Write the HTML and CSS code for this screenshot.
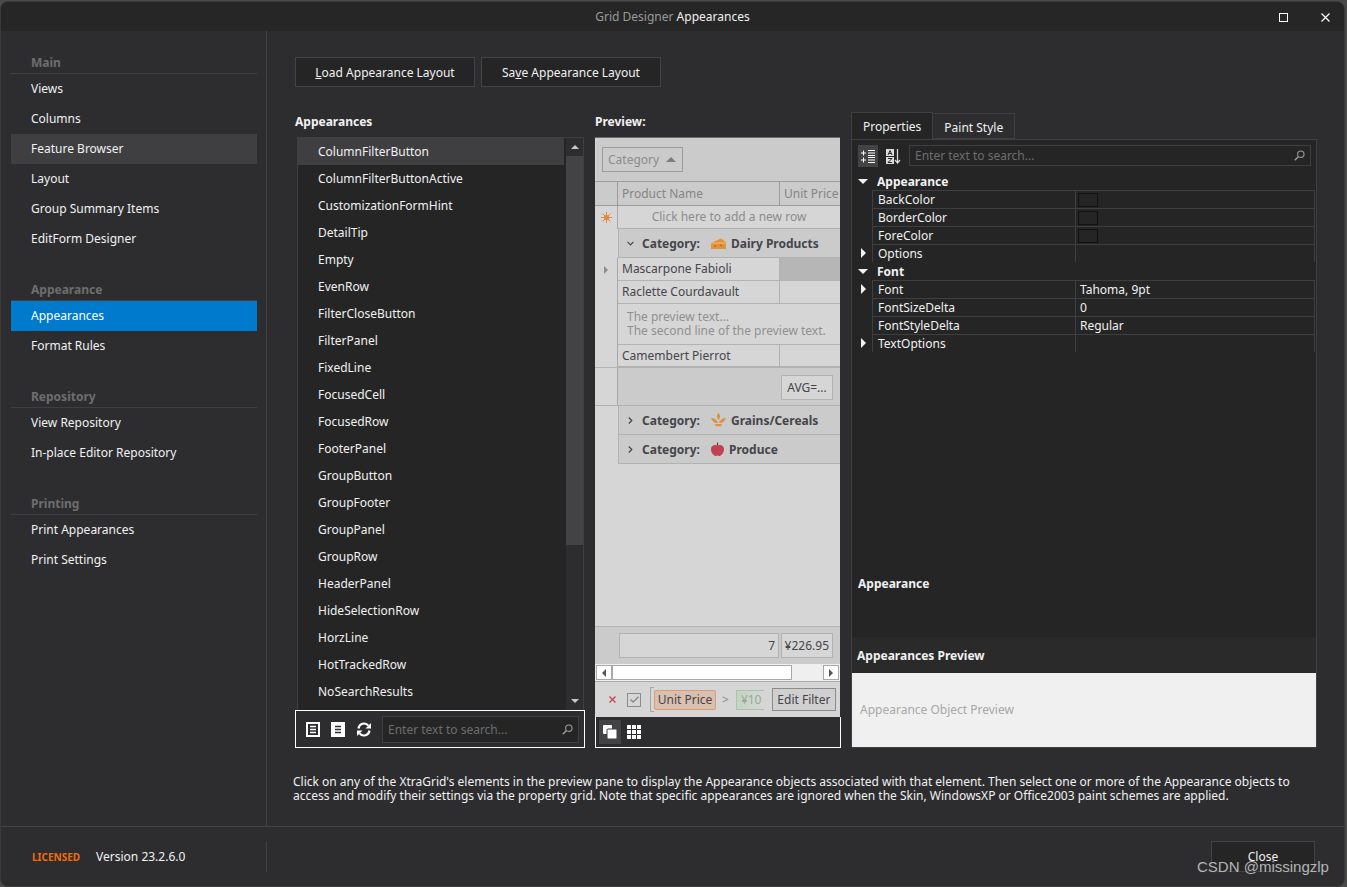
FILE: index.html
```html
<!DOCTYPE html>
<html lang="en">
<head>
  <meta charset="UTF-8" />
  <meta name="viewport" content="width=device-width, initial-scale=1.0" />
  <title>Grid Designer Appearances</title>
  <link rel="stylesheet" href="styles.css">
</head>
<body>
  <div class="window">
    <div class="titlebar">
      <span class="title"><span class="title-dim">Grid Designer</span> Appearances</span>
      <div class="win-btns">
        <svg width="9" height="9" viewBox="0 0 9 9"><rect x="0.5" y="0.5" width="8" height="8" fill="none" stroke="#fff"/></svg>
        <svg width="9" height="9" viewBox="0 0 9 9"><path d="M0.5 0.5L8.5 8.5M8.5 0.5L0.5 8.5" stroke="#fff" stroke-width="1.2"/></svg>
      </div>
    </div>

    <div class="content">
      <div class="sidebar">
        <div class="nav-group">
          <div class="nav-head">Main</div>
          <div class="nav-item">Views</div>
          <div class="nav-item">Columns</div>
          <div class="nav-item hover">Feature Browser</div>
          <div class="nav-item">Layout</div>
          <div class="nav-item">Group Summary Items</div>
          <div class="nav-item">EditForm Designer</div>
        </div>
        <div class="nav-group">
          <div class="nav-head">Appearance</div>
          <div class="nav-item active">Appearances</div>
          <div class="nav-item">Format Rules</div>
        </div>
        <div class="nav-group">
          <div class="nav-head">Repository</div>
          <div class="nav-item">View Repository</div>
          <div class="nav-item">In-place Editor Repository</div>
        </div>
        <div class="nav-group">
          <div class="nav-head">Printing</div>
          <div class="nav-item">Print Appearances</div>
          <div class="nav-item">Print Settings</div>
        </div>
      </div>

      <div class="main">
        <div class="top-btns">
          <button class="btn"><u>L</u>oad Appearance Layout</button>
          <button class="btn">Sa<u>v</u>e Appearance Layout</button>
        </div>

        <div class="columns">
          <div class="col-list">
            <div class="col-label">Appearances</div>
            <div class="listbox">
              <div class="list-items">
                <div class="list-item sel">ColumnFilterButton</div>
                <div class="list-item">ColumnFilterButtonActive</div>
                <div class="list-item">CustomizationFormHint</div>
                <div class="list-item">DetailTip</div>
                <div class="list-item">Empty</div>
                <div class="list-item">EvenRow</div>
                <div class="list-item">FilterCloseButton</div>
                <div class="list-item">FilterPanel</div>
                <div class="list-item">FixedLine</div>
                <div class="list-item">FocusedCell</div>
                <div class="list-item">FocusedRow</div>
                <div class="list-item">FooterPanel</div>
                <div class="list-item">GroupButton</div>
                <div class="list-item">GroupFooter</div>
                <div class="list-item">GroupPanel</div>
                <div class="list-item">GroupRow</div>
                <div class="list-item">HeaderPanel</div>
                <div class="list-item">HideSelectionRow</div>
                <div class="list-item">HorzLine</div>
                <div class="list-item">HotTrackedRow</div>
                <div class="list-item">NoSearchResults</div>
              </div>
              <div class="vscroll">
                <div class="vscroll-btn"><span class="tri-up"></span></div>
                <div class="vscroll-thumb"></div>
                <div class="vscroll-track"></div>
                <div class="vscroll-btn"><span class="tri-down"></span></div>
              </div>
            </div>
            <div class="list-tools">
              <svg class="tool-icon" width="14" height="15" viewBox="0 0 14 15"><rect x="1" y="1" width="12" height="13" fill="none" stroke="#fff" stroke-width="2"/><path d="M4 4.5h6M4 7.5h6M4 10.5h6" stroke="#fff" stroke-width="1.4"/></svg>
              <svg class="tool-icon" width="14" height="15" viewBox="0 0 14 15"><rect width="14" height="15" fill="#fff"/><path d="M4 4.5h6M4 7.5h6M4 10.5h6" stroke="#2d2d30" stroke-width="1.4"/></svg>
              <svg class="tool-icon" width="16" height="15" viewBox="0 0 16 15"><path d="M2.5 6.5A5.6 5.6 0 0 1 12.4 3.6" fill="none" stroke="#fff" stroke-width="2.2"/><path d="M15 1v5.5H9.5z" fill="#fff"/><path d="M13.5 8.5A5.6 5.6 0 0 1 3.6 11.4" fill="none" stroke="#fff" stroke-width="2.2"/><path d="M1 14V8.5h5.5z" fill="#fff"/></svg>
              <div class="search list-search">
                <span>Enter text to search...</span>
                <svg width="11" height="11" viewBox="0 0 11 11"><circle cx="6.8" cy="4.2" r="3.2" fill="none" stroke="#9a9a9a" stroke-width="1.1"/><path d="M4.5 6.5L0.8 10.2" stroke="#9a9a9a" stroke-width="1.5"/></svg>
              </div>
            </div>
          </div>

          <div class="col-preview">
            <div class="col-label">Preview:</div>
            <div class="preview">
              <div class="group-panel">
                <div class="group-chip">Category <span class="chip-arrow"></span></div>
              </div>
              <div class="grid">
                <div class="row header-row">
                  <div class="ind"></div>
                  <div class="cell name">Product Name</div>
                  <div class="cell price">Unit Price</div>
                </div>
                <div class="row new-row">
                  <div class="ind"><svg width="11" height="11" viewBox="0 0 11 11"><circle cx="5.5" cy="5.5" r="2.6" fill="#e08a3c"/><path d="M5.5 0v11M0 5.500h11M1.600 1.600l7.800 7.800M9.400 1.600l-7.800 7.800" stroke="#e08a3c" stroke-width="1"/></svg></div>
                  <div class="cell new-text">Click here to add a new row</div>
                </div>
                <div class="group-row tall">
                  <svg class="chev" width="7" height="5" viewBox="0 0 7 5"><path d="M0.500 0.800L3.500 3.800L6.500 0.800" fill="none" stroke="#444" stroke-width="1.200"/></svg>
                  <b class="cat">Category:</b>
                  <svg class="cat-icon" width="15" height="11" viewBox="0 0 15 11"><path d="M0 5L10 0.500L15 4V11H0z" fill="#e0933a"/><path d="M0 5H15" stroke="#f4bd6a"/><circle cx="4" cy="8" r="1" fill="#b86f1f"/><circle cx="10" cy="7.500" r="1" fill="#b86f1f"/></svg>
                  <b class="cat-name">Dairy Products</b>
                </div>
                <div class="row data-row">
                  <div class="ind"><span class="tri-right grey"></span></div>
                  <div class="cell name">Mascarpone Fabioli</div>
                  <div class="cell price focused">¥</div>
                </div>
                <div class="row data-row">
                  <div class="ind"></div>
                  <div class="cell name">Raclette Courdavault</div>
                  <div class="cell price">¥</div>
                </div>
                <div class="preview-row">
                  <div class="ind"></div>
                  <div class="preview-text">The preview text...<br>The second line of the preview text.</div>
                </div>
                <div class="row data-row last">
                  <div class="ind"></div>
                  <div class="cell name">Camembert Pierrot</div>
                  <div class="cell price">¥</div>
                </div>
                <div class="group-footer">
                  <div class="ind"></div>
                  <div class="avg">AVG=...</div>
                </div>
                <div class="group-row">
                  <svg class="chev right" width="5" height="7" viewBox="0 0 5 7"><path d="M0.800 0.500L3.800 3.500L0.800 6.500" fill="none" stroke="#444" stroke-width="1.200"/></svg>
                  <b class="cat">Category:</b>
                  <svg class="cat-icon" width="15" height="14" viewBox="0 0 15 14"><path d="M7.500 0C9.500 2 9.500 4.500 7.500 7C5.500 4.500 5.500 2 7.500 0zM0 5C3 5 6 6.500 7 10C4 10.500 1.500 9 0 5zM15 5C12 5 9 6.500 8 10C11 10.500 13.500 9 15 5zM3.500 11.500C5 10.800 6.500 10.800 7.500 11C8.500 10.800 10 10.800 11.500 11.500C10 13.500 9 14 7.500 13C6 14 5 13.500 3.500 11.500z" fill="#dc9242"/></svg>
                  <b class="cat-name">Grains/Cereals</b>
                </div>
                <div class="group-row">
                  <svg class="chev right" width="5" height="7" viewBox="0 0 5 7"><path d="M0.800 0.500L3.800 3.500L0.800 6.500" fill="none" stroke="#444" stroke-width="1.200"/></svg>
                  <b class="cat">Category:</b>
                  <svg class="cat-icon" width="13" height="14" viewBox="0 0 13 14"><path d="M6.500 3.500C8 2.500 13 2.500 13 7.500C13 11 10 14 8.500 14C7.500 14 7 13.500 6.500 13.500C6 13.500 5.500 14 4.500 14C3 14 0 11 0 7.500C0 2.500 5 2.500 6.500 3.500z" fill="#c0414f"/><path d="M6.500 3.500V0.500" stroke="#5a3a2a" stroke-width="1.200"/></svg>
                  <b class="cat-name apple">Produce</b>
                </div>
              </div>
              <div class="grid-footer">
                <div class="foot-cell count">7</div>
                <div class="foot-cell sum">¥226.95</div>
              </div>
              <div class="hscroll">
                <div class="hscroll-btn"><span class="tri-left"></span></div>
                <div class="hscroll-thumb"></div>
                <div class="hscroll-btn end"><span class="tri-right"></span></div>
              </div>
              <div class="filter-panel">
                <svg class="filter-x" width="7" height="7" viewBox="0 0 7 7"><path d="M0.500 0.500L6.500 6.500M6.500 0.500L0.500 6.500" stroke="#c9404a" stroke-width="1.200"/></svg>
                <div class="filter-check"><svg width="9" height="7" viewBox="0 0 9 7"><path d="M0.500 3.500L3.200 6L8.500 0.800" fill="none" stroke="#8a8a8a" stroke-width="1.400"/></svg></div>
                <div class="filter-bracket"></div>
                <div class="filter-field">Unit Price</div>
                <span class="filter-op">&gt;</span>
                <div class="filter-val">¥10</div>
                <div class="filter-edit">Edit Filter</div>
              </div>
            </div>
            <div class="preview-tools">
              <div class="pv-btn on"><svg width="14" height="14" viewBox="0 0 14 14"><rect width="9" height="9" rx="1" fill="#fff"/><rect x="4" y="4" width="10" height="10" rx="1" fill="#fff" stroke="#3f3f42"/></svg></div>
              <div class="pv-btn"><svg width="14" height="14" viewBox="0 0 14 14"><path d="M0 0h4v4H0zM5 0h4v4H5zM10 0h4v4h-4zM0 5h4v4H0zM5 5h4v4H5zM10 5h4v4h-4zM0 10h4v4H0zM5 10h4v4H5zM10 10h4v4h-4z" fill="#fff"/></svg></div>
            </div>
          </div>

          <div class="col-props">
            <div class="tabs">
              <div class="tab on">Properties</div>
              <div class="tab">Paint Style</div>
            </div>
            <div class="props">
              <div class="props-tools">
                <div class="pt-btn on"><svg width="14" height="13" viewBox="0 0 14 13"><path d="M0 3h5M2.500 0.500v5M0 10h5M2.500 7.500v5M7 0.500h7M7 3h7M7 5.500h7M7 7.500h7M7 10h7M7 12.500h7" stroke="#fff" stroke-width="1"/></svg></div>
                <div class="pt-btn"><svg width="15" height="15" viewBox="0 0 15 15"><rect x="0" y="0" width="8" height="7" fill="#ddd"/><rect x="0" y="8" width="8" height="7" fill="#ddd"/><path d="M2 6L4 1.500L6 6M3 4.500H5M2 9.500H6L2 13.500H6" fill="none" stroke="#252526" stroke-width="1"/><path d="M11.500 0V14M9 11L11.500 14L14 11" fill="none" stroke="#ddd" stroke-width="1.200"/></svg></div>
                <div class="search props-search">
                  <span>Enter text to search...</span>
                  <svg width="11" height="11" viewBox="0 0 11 11"><circle cx="6.800" cy="4.200" r="3.200" fill="none" stroke="#9a9a9a" stroke-width="1.100"/><path d="M4.500 6.500L0.800 10.200" stroke="#9a9a9a" stroke-width="1.500"/></svg>
                </div>
              </div>
              <div class="pg">
                <div class="pg-cat"><span class="pg-exp"><span class="tri-down white"></span></span><b>Appearance</b></div>
                <div class="pg-row"><span class="pg-exp"></span><div class="pg-name">BackColor</div><div class="pg-val"><span class="swatch"></span></div></div>
                <div class="pg-row"><span class="pg-exp"></span><div class="pg-name">BorderColor</div><div class="pg-val"><span class="swatch"></span></div></div>
                <div class="pg-row"><span class="pg-exp"></span><div class="pg-name">ForeColor</div><div class="pg-val"><span class="swatch"></span></div></div>
                <div class="pg-row"><span class="pg-exp"><span class="tri-right white"></span></span><div class="pg-name">Options</div><div class="pg-val"></div></div>
                <div class="pg-cat"><span class="pg-exp"><span class="tri-down white"></span></span><b>Font</b></div>
                <div class="pg-row"><span class="pg-exp"><span class="tri-right white"></span></span><div class="pg-name">Font</div><div class="pg-val">Tahoma, 9pt</div></div>
                <div class="pg-row"><span class="pg-exp"></span><div class="pg-name">FontSizeDelta</div><div class="pg-val">0</div></div>
                <div class="pg-row"><span class="pg-exp"></span><div class="pg-name">FontStyleDelta</div><div class="pg-val">Regular</div></div>
                <div class="pg-row"><span class="pg-exp"><span class="tri-right white"></span></span><div class="pg-name">TextOptions</div><div class="pg-val"></div></div>
              </div>
              <div class="pg-desc"><b>Appearance</b></div>
              <div class="ap-head"><b>Appearances Preview</b></div>
              <div class="ap-box">Appearance Object Preview</div>
            </div>
          </div>
        </div>

        <p class="help">Click on any of the XtraGrid's elements in the preview pane to display the Appearance objects associated with that element. Then select one or more of the Appearance objects to<br>access and modify their settings via the property grid. Note that specific appearances are ignored when the Skin, WindowsXP or Office2003 paint schemes are applied.</p>
      </div>
    </div>

    <div class="footer">
      <div class="foot-left">
        <span class="licensed">LICENSED</span>
        <span class="version">Version 23.2.6.0</span>
      </div>
      <button class="btn close-btn">Close</button>
    </div>
  </div>
  <div class="watermark">CSDN @missingzlp</div>
</body>
</html>
```

FILE: styles.css
```css
* {
  box-sizing: border-box;
}

html,
body {
  margin: 0;
  height: 100%;
  overflow: hidden;
}

body {
  background-color: #4a4a4a;
  font-family: "Noto Sans", Tahoma, sans-serif;
  font-size: 12px;
  color: #f1f1f1;
  position: relative;
}

.window {
  width: 1345px;
  height: 886px;
  margin-top: 1px;
  background-color: #2d2d30;
  border: 1px solid #3a3a3a;
  border-radius: 8px;
  overflow: hidden;
  display: flex;
  flex-direction: column;
}

/* title bar */
.titlebar {
  height: 29px;
  background-color: #262626;
  display: flex;
  align-items: center;
  justify-content: center;
  position: relative;
  flex-shrink: 0;
}

.title {
  font-weight: 400;
  color: #f1f1f1;
}

.title-dim {
  color: #9a9a9a;
}

.win-btns {
  position: absolute;
  right: 14px;
  top: 11px;
  display: flex;
  gap: 33px;
}

.win-btns svg {
  display: block;
}

.content {
  flex: 1;
  display: flex;
  min-height: 0;
}

/* left nav */
.sidebar {
  width: 266px;
  padding: 16px 9px 0 10px;
  border-right: 1px solid #434346;
  flex-shrink: 0;
}

.nav-group {
  margin-bottom: 20px;
}

.nav-head {
  height: 27px;
  padding: 7px 0 0 20px;
  font-weight: bold;
  color: #6d6d6d;
  border-bottom: 1px solid #3f3f42;
}

.nav-item {
  height: 30px;
  line-height: 30px;
  padding-left: 20px;
}

.nav-item.hover {
  background-color: #3f3f42;
}

.nav-item.active {
  background-color: #007acc;
  color: #fff;
}

/* main area */
.main {
  flex: 1;
  padding: 26px 0 0 28px;
  min-width: 0;
}

.top-btns {
  display: flex;
  gap: 6px;
  margin-bottom: 25px;
}

.btn {
  width: 180px;
  height: 30px;
  background-color: #252526;
  border: 1px solid #434346;
  color: #f1f1f1;
  font-family: inherit;
  font-size: 12px;
  padding: 0;
}

.columns {
  display: flex;
  gap: 10px;
  height: 636px;
}

.col-list {
  width: 290px;
  display: flex;
  flex-direction: column;
}

.col-preview {
  width: 246px;
  display: flex;
  flex-direction: column;
}

.col-props {
  width: 466px;
  display: flex;
  flex-direction: column;
}

.col-label {
  height: 25px;
  padding-top: 1px;
  font-weight: bold;
  flex-shrink: 0;
}

/* appearances list */
.listbox {
  flex: 1;
  margin-left: 2px;
  margin-right: 1px;
  display: flex;
  background-color: #252526;
  border: 1px solid #3f3f42;
  border-bottom: 0;
  min-height: 0;
}

.list-items {
  flex: 1;
  overflow: hidden;
}

.list-item {
  height: 27px;
  line-height: 27px;
  padding-left: 20px;
  margin-right: 2px;
}

.list-item.sel {
  background-color: #3f3f42;
}

.vscroll {
  width: 17px;
  background-color: #2d2d30;
  display: flex;
  flex-direction: column;
}

.vscroll-btn {
  height: 18px;
  display: flex;
  align-items: center;
  justify-content: center;
  flex-shrink: 0;
}

.vscroll-thumb {
  height: 389px;
  background-color: #434346;
}

.vscroll-track {
  flex: 1;
}

.tri-up,
.tri-down,
.tri-left,
.tri-right {
  display: inline-block;
  width: 0;
  height: 0;
  border-style: solid;
  border-color: transparent;
}

.tri-up {
  border-width: 0 4px 4px;
  border-bottom-color: #c8c8c8;
}

.tri-down {
  border-width: 4px 4px 0;
  border-top-color: #c8c8c8;
}

.tri-left {
  border-width: 4px 4px 4px 0;
  border-right-color: #555;
}

.tri-right {
  border-width: 4px 0 4px 4px;
  border-left-color: #555;
}

.tri-down.white {
  border-width: 5px 5px 0;
  border-top-color: #f1f1f1;
}

.tri-right.white {
  border-width: 5px 0 5px 5px;
  border-left-color: #f1f1f1;
}

.tri-right.grey {
  border-left-color: #8c8c8c;
}

.list-tools {
  height: 38px;
  border: 1px solid #fff;
  border-top-color: #fff;
  display: flex;
  align-items: center;
  padding-left: 10px;
  flex-shrink: 0;
}

.tool-icon {
  margin-right: 11px;
  flex-shrink: 0;
}

.tool-icon:nth-child(3) {
  margin-right: 10px;
}

.search {
  background-color: #252526;
  border: 1px solid #3f3f42;
  display: flex;
  align-items: center;
  justify-content: space-between;
  color: #6d6d6d;
  padding: 0 5px;
}

.list-search {
  width: 197px;
  height: 27px;
}

/* preview pane */
.preview {
  flex: 1;
  width: 245px;
  margin-left: 0;
  background-color: #d6d6d6;
  border-top: 1px solid #6a6a6a;
  display: flex;
  flex-direction: column;
  overflow: hidden;
  color: #45454a;
  min-height: 0;
}

.group-panel {
  height: 43px;
  background-color: #cbcbcb;
  padding: 9px 0 0 6px;
  flex-shrink: 0;
  border-left: 1px solid #d6d6d6;
}

.group-chip {
  width: 81px;
  height: 25px;
  border: 1px solid #9c9c9c;
  color: #8c8c8c;
  line-height: 23px;
  padding-left: 5px;
  display: flex;
  align-items: center;
  gap: 7px;
}

.chip-arrow {
  width: 0;
  height: 0;
  border-style: solid;
  border-width: 0 5px 5px;
  border-color: transparent transparent #7d7d7d;
}

.grid {
  flex: 1;
  width: 320px;
  min-height: 0;
}

.row {
  display: flex;
  height: 23px;
}

.ind {
  width: 23px;
  flex-shrink: 0;
  display: flex;
  align-items: center;
  justify-content: center;
  border-right: 1px solid #a8a8a8;
}

.cell {
  line-height: 21px;
  padding-left: 4px;
  border-right: 1px solid #b2b2b2;
  border-bottom: 1px solid #b2b2b2;
  overflow: hidden;
  white-space: nowrap;
}

.cell.name {
  width: 162px;
}

.cell.price {
  width: 100px;
  padding-left: 0;
  text-indent: 60px;
  color: #5a5a5a;
}

.cell.focused {
  background-color: #b6b6b6;
}

.header-row {
  height: 25px;
  background-color: #cbcbcb;
  border-top: 1px solid #9c9c9c;
  border-bottom: 1px solid #9c9c9c;
}

.header-row .cell {
  color: #858585;
  border-bottom: 0;
  line-height: 23px;
  border-right-color: #9c9c9c;
}

.header-row .cell.price {
  text-indent: 4px;
  color: #858585;
}

.header-row .ind {
  border-right-color: #9c9c9c;
}

.new-row {
  background-color: #d6d6d6;
}

.new-text {
  width: 222px;
  color: #8c8c8c;
  text-align: center;
  padding-left: 0;
  border-right: 0;
}

.group-row {
  height: 29px;
  margin-left: 23px;
  width: 297px;
  padding-left: 8px;
  display: flex;
  align-items: center;
  background-color: #cbcbcb;
  border-left: 1px solid #b2b2b2;
  border-bottom: 1px solid #b2b2b2;
  color: #45454a;
}

.chev {
  margin-right: 8px;
  flex-shrink: 0;
}

.chev.right {
  margin-left: 1px;
  margin-right: 9px;
}

.cat {
  width: 69px;
}

.cat-icon {
  flex-shrink: 0;
  margin-right: 5px;
}

.preview-row {
  display: flex;
  height: 41px;
}

.preview-text {
  padding: 6px 0 0 9px;
  line-height: 14px;
  color: #909090;
  border-bottom: 1px solid #b2b2b2;
  flex: 1;
  white-space: nowrap;
}

.data-row {
  background-color: #d6d6d6;
}

.data-row.last {
  height: 22px;
}

.group-footer {
  height: 39px;
  display: flex;
  background-color: #cbcbcb;
  border-top: 1px solid #b2b2b2;
  border-bottom: 1px solid #b2b2b2;
  position: relative;
  padding-top: 7px;
}

.group-footer .ind {
  background-color: #d6d6d6;
  margin-top: -7px;
}

.avg {
  width: 52px;
  height: 25px;
  margin-left: 163px;
  background-color: #d6d6d6;
  border: 1px solid #b2b2b2;
  line-height: 23px;
  text-align: center;
}

.grid-footer {
  height: 38px;
  background-color: #cbcbcb;
  border-top: 1px solid #b2b2b2;
  display: flex;
  gap: 2px;
  padding: 6px 0 0 24px;
  flex-shrink: 0;
}

.foot-cell {
  height: 25px;
  background-color: #d6d6d6;
  border: 1px solid #b2b2b2;
  line-height: 23px;
  text-align: right;
  padding-right: 3px;
}

.foot-cell.count {
  width: 160px;
}

.foot-cell.sum {
  width: 52px;
}

.hscroll {
  height: 17px;
  display: flex;
  align-items: center;
  background-color: #efefef;
  padding: 0 1px;
  flex-shrink: 0;
}

.hscroll-btn {
  width: 16px;
  height: 15px;
  background-color: #fff;
  border: 1px solid #a8a8a8;
  display: flex;
  align-items: center;
  justify-content: center;
}

.hscroll-thumb {
  width: 180px;
  height: 15px;
  background-color: #fff;
  border: 1px solid #a8a8a8;
}

.hscroll-btn.end {
  margin-left: auto;
}

.filter-panel {
  height: 36px;
  background-color: #d6d6d6;
  border-top: 1px solid #a8a8a8;
  display: flex;
  align-items: center;
  padding-left: 14px;
  flex-shrink: 0;
  white-space: nowrap;
}

.filter-check {
  width: 14px;
  height: 14px;
  border: 1px solid #8c8c8c;
  margin-left: 11px;
  display: flex;
  align-items: center;
  justify-content: center;
}

.filter-bracket {
  width: 4px;
  height: 25px;
  border: 1px solid #a8a8a8;
  border-right: 0;
  margin-left: 9px;
}

.filter-field {
  height: 20px;
  line-height: 18px;
  width: 62px;
  text-align: center;
  margin-left: 0;
  background-color: #d9c0b0;
  border: 1px solid #dd9c74;
  border-radius: 2px;
  color: #45454a;
}

.filter-op {
  margin: 0 7px 0 6px;
  color: #8c8c8c;
}

.filter-val {
  width: 28px;
  height: 20px;
  line-height: 18px;
  padding-left: 4px;
  color: #98a898;
  border: 1px solid #a9c4a9;
  border-right: 0;
  background-image: linear-gradient(to right, #c4d4c4, #d6d6d6);
  overflow: hidden;
}

.filter-edit {
  width: 64px;
  height: 23px;
  line-height: 21px;
  text-align: center;
  margin-left: 8px;
  background-color: #d0d0d0;
  border: 1px solid #8c8c8c;
  flex-shrink: 0;
}

.preview-tools {
  height: 31px;
  width: 246px;
  border: 1px solid #fff;
  border-top: 0;
  padding: 0 0 0 3px;
  display: flex;
  gap: 2px;
  flex-shrink: 0;
}

.pv-btn {
  width: 22px;
  height: 24px;
  display: flex;
  align-items: center;
  justify-content: center;
  margin-top: 3px;
}

.pv-btn.on {
  background-color: #434346;
}

/* properties */
.tabs {
  display: flex;
  height: 27px;
  flex-shrink: 0;
}

.tab {
  padding: 0 11px;
  line-height: 27px;
  background-color: #2d2d30;
  border: 1px solid #3f3f42;
  border-left: 0;
  margin-top: 1px;
}

.tab.on {
  background-color: #252526;
  border-left: 1px solid #3f3f42;
  border-bottom: 0;
  margin-top: 0;
}

.props {
  flex: 1;
  background-color: #252526;
  border: 1px solid #3f3f42;
  display: flex;
  flex-direction: column;
  min-height: 0;
}

.props-tools {
  height: 32px;
  padding: 5px 5px 0 6px;
  display: flex;
  flex-shrink: 0;
}

.pt-btn {
  width: 20px;
  height: 22px;
  margin-right: 5px;
  display: flex;
  align-items: center;
  justify-content: center;
}

.pt-btn.on {
  background-color: #434346;
}

.props-search {
  flex: 1;
  height: 21px;
  margin-left: 1px;
}

.pg {
  flex: 1;
  min-height: 0;
  padding-right: 1px;
}

.pg-cat,
.pg-row {
  height: 18px;
  display: flex;
  align-items: center;
}

.pg-exp {
  width: 20px;
  flex-shrink: 0;
  display: flex;
  justify-content: center;
  padding-left: 2px;
}

.pg-row .pg-name {
  width: 203px;
  height: 18px;
  line-height: 17px;
  padding-left: 5px;
  border: 1px solid #3f3f42;
  border-right: 0;
  border-bottom: 0;
}

.pg-row .pg-val {
  flex: 1;
  height: 18px;
  line-height: 17px;
  padding-left: 4px;
  border: 1px solid #3f3f42;
  border-bottom: 0;
  display: flex;
  align-items: center;
}

.pg-cat + .pg-row .pg-name {
  border-top-color: #3f3f42;
}

.pg-cat b {
  padding-left: 5px;
}

.swatch {
  display: block;
  width: 20px;
  height: 14px;
  margin-left: -2px;
  background-color: #252526;
  border: 1px solid #111;
}

.pg-desc {
  height: 62px;
  padding: 0 0 0 6px;
  flex-shrink: 0;
}

.ap-head {
  height: 36px;
  line-height: 38px;
  padding-left: 5px;
  background-color: #2a2a2b;
  flex-shrink: 0;
}

.ap-box {
  height: 74px;
  background-color: #f0f0f0;
  color: #a8a8a8;
  padding-left: 8px;
  line-height: 74px;
  flex-shrink: 0;
}

.help {
  margin: 27px 0 0 -2px;
  line-height: 14px;
  white-space: nowrap;
}

/* bottom bar */
.footer {
  height: 60px;
  border-top: 1px solid #434346;
  position: relative;
  flex-shrink: 0;
  display: flex;
  align-items: flex-start;
  justify-content: space-between;
  padding-top: 14px;
}

.foot-left {
  width: 266px;
  height: 31px;
  padding-left: 31px;
  display: flex;
  align-items: center;
  gap: 16px;
  border-right: 1px solid #434346;
}

.licensed {
  font-size: 10px;
  font-weight: bold;
  color: #f26b0a;
}

.close-btn {
  width: 104px;
  height: 31px;
  margin-right: 29px;
  padding-top: 0;
}

.watermark {
  position: absolute;
  left: 1197px;
  top: 858px;
  font-family: "Liberation Sans", sans-serif;
  font-size: 15px;
  color: #b4b4b4;
  text-shadow: 1px 1px 1px #333;
}
```
